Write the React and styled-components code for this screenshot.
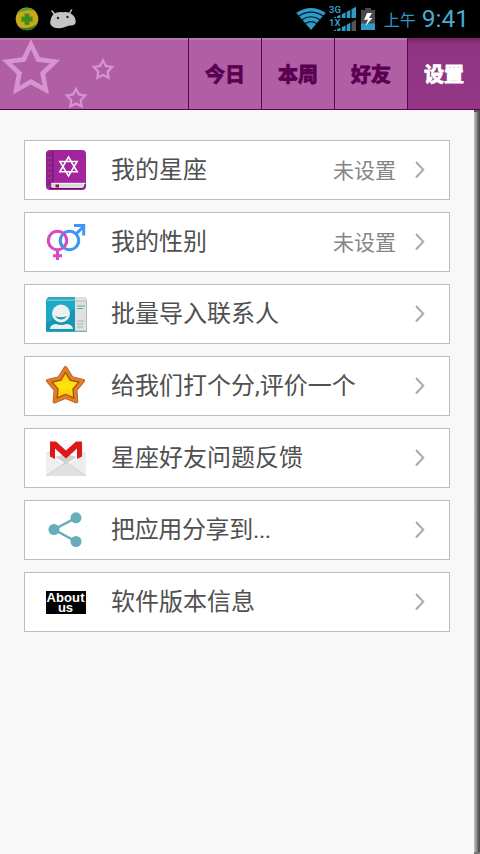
import React from 'react';
import styled, { createGlobalStyle } from 'styled-components';

const GlobalStyle = createGlobalStyle`
  * {
    box-sizing: border-box;
  }

  html, body, #root {
    height: 100%;
  }

  body {
    margin: 0;
    overflow: hidden;
    background: #f8f8f8;
    font-family: Roboto, "Noto Sans CJK SC", sans-serif;
  }

  svg {
    display: block;
    flex: none;
  }
`;

const star = (cx, cy, outer, inner) => {
  const points = [];
  for (let i = 0; i < 10; i++) {
    const r = i % 2 ? inner : outer;
    const a = (Math.PI / 5) * i - Math.PI / 2;
    points.push(`${(cx + r * Math.cos(a)).toFixed(2)} ${(cy + r * Math.sin(a)).toFixed(2)}`);
  }
  return `M${points.join('L')}Z`;
};

const AntivirusIcon = () => (
  <svg width="24" height="24" viewBox="0 0 24 24">
    <circle cx="12" cy="12" r="11.3" fill="#c9a81c" />
    <path d="M2 6A11.3 11.3 0 0 1 20 4C14 2 8 4 2 6Z" fill="#5f9a2c" />
    <path d="M4 20A11.3 11.3 0 0 0 22.5 16C18 21 10 22 4 20Z" fill="#2c7a2c" />
    <path d="M9.5 6.5h5v3.2h3.2v5h-3.2v3.2h-5v-3.2H6.300v-5h3.200z" fill="#3d8c1c" stroke="#86a023" strokeWidth=".7" />
  </svg>
);

const AndroidIcon = () => (
  <svg width="26" height="20" viewBox="0 0 26 20">
    <path d="M4.500 5 2 2M19.500 4.500 21.500 1" stroke="#c4c4c4" strokeWidth="1.500" strokeLinecap="round" />
    <path d="M3.500 5Q8 2.400 13 3.200Q18 2.200 21.500 5Q26 8 25.700 13.500Q25 16.500 21 16.500Q18 16.500 16.500 17.500Q11 20 7 19Q5 19.200 3 18Q-.5 16 .3 12.500Q.5 8 3.500 5Z" fill="#c4c4c4" />
    <circle cx="8" cy="9" r="1.200" fill="#222" />
    <circle cx="17.500" cy="8" r="1.200" fill="#222" />
  </svg>
);

const WifiIcon = () => (
  <svg width="30" height="22" viewBox="0 0 30 22">
    <path d="M.3 4.800Q15-4.800 29.700 4.800L15 22Z" fill="#2e9bc8" />
    <path d="M2.500 8.200Q15 .2 27.500 8.200M5.600 12Q15 5.500 24.400 12M9 15.800Q15 11.500 21 15.800" fill="none" stroke="#041923" strokeWidth="1.200" />
  </svg>
);

const SignalIcon = () => (
  <svg width="27" height="26" viewBox="0 0 27 26" overflow="visible">
    <g fill="#2e9bc8">
      <path d="M3 12 6 10.500V12ZM7 10.300 10.500 8.800V12H7ZM11.800 8.200 15.500 6.300V12H11.800ZM16.700 5.800 20.300 3.800V12H16.700ZM21.500 3.200 26 .7V12H21.500Z" />
      <path d="M3 25 6 23.500V25ZM7 23.300 10.500 21.800V25H7ZM11.800 21.200 15.500 19.300V25H11.800ZM16.700 18.800 20.300 16.800V25H16.700Z" />
    </g>
    <path d="M21.500 16.200 26 13.700V25H21.500Z" fill="#555" />
    <g fill="#3aa5d0" stroke="#000" strokeWidth="1.500" paintOrder="stroke" fontFamily="Roboto" fontSize="9.500" fontWeight="500">
      <text x="-1" y="7">3G</text>
      <text x="-1" y="20">1X</text>
    </g>
  </svg>
);

const BatteryIcon = () => (
  <svg width="14" height="22" viewBox="0 0 14 22">
    <path d="M4 0h6v2h4v14H0V2h4z" fill="#4a4a4a" />
    <path d="M0 15.500h14V22H0z" fill="#2e9bc8" />
    <path d="M6 5 3 12 7 11.500 4.500 18 11.500 10H8L11 5Z" fill="#fff" />
  </svg>
);

const HeaderStars = () => (
  <svg width="188" height="71" viewBox="0 38 188 71">
    <g fill="#d795cf" fillRule="evenodd">
      <path d={star(31, 69.500, 30.500, 15) + star(31, 69.500, 20, 9.500)} />
      <path d={star(103, 70, 12, 6.200) + star(103, 70, 7.200, 3.700)} />
      <path d={star(76, 98.500, 12, 6.200) + star(76, 98.500, 7.200, 3.700)} />
    </g>
  </svg>
);

const BookIcon = () => (
  <svg width="40" height="40" viewBox="0 0 40 40">
    <rect width="40" height="40" rx="4" fill="#a3259d" />
    <path d="M3 1H7V33L2 36Q0 36 0 32V5Q0 2 3 1Z" fill="#91208f" />
    <path d="M7 1V33" stroke="#6f176c" strokeWidth="1" />
    <path d="M1 8H6M1 13H6M1 18H6M1 23H6M1 28H6" stroke="#b55ab2" strokeWidth=".5" />
    <path d="M6 33H39.500Q37.500 35 38 38H7Q3.500 37 6 33Z" fill="#ddd8dc" />
    <path d="M5 33.300H39.500" stroke="#fff" strokeWidth=".8" />
    <path d="M4 38.500H36Q39.500 38 39.500 34" fill="none" stroke="#5e155b" />
    <path d="M9.500 34.500h3.500v3H9.500z" fill="#8f1b2d" />
    <path d="M22.500 7 31.200 21.800H13.800ZM22.500 26 31.200 11.500H13.800Z" fill="none" stroke="#fff" strokeWidth="1.500" />
  </svg>
);

const GenderIcon = () => (
  <svg width="40" height="40" viewBox="0 0 40 40" fill="none" strokeWidth="3">
    <circle cx="23.500" cy="18.500" r="9.200" stroke="#3f96f3" />
    <path d="M30 12 37.300 4.700M28 3.500H37.700V13.500" stroke="#3f96f3" />
    <circle cx="11.500" cy="18.500" r="9.200" stroke="#d44bc5" />
    <path d="M11.500 27.700V38M7 33.700H16" stroke="#d44bc5" />
    <path d="M14.800 15.500A9.200 9.200 0 0 0 17.500 25.500" stroke="#3f96f3" />
  </svg>
);

const ContactsIcon = () => (
  <svg width="42" height="36" viewBox="0 0 42 36">
    <path d="M2 1H39L41 4V36H0V4Z" fill="#36a7bb" />
    <path d="M29 1H39L41 4V35H29Z" fill="#dfe1df" />
    <path d="M1 3.500H29V5H1Z" fill="#65cadb" />
    <path d="M0 5H29V35H0Z" fill="#1da9c5" />
    <path d="M0 27 29 13V35H0Z" fill="#1497b6" />
    <path d="M29 5H41M29 35H41" stroke="#aeb9ba" strokeWidth=".8" />
    <circle cx="15" cy="17.500" r="9" fill="#eef0ef" />
    <path d="M9 20Q15 22.500 21 20Q18.500 23.500 15 23.500Q11.500 23.500 9 20Z" fill="#2196ac" />
    <path d="M4 33Q4 28.500 10 28Q15 30 20.500 28Q26.500 28.500 27 33Z" fill="#eef0ef" />
    <path d="M31 10H39M31 12.500H37" stroke="#4daec0" />
    <path d="M31 25H38M31 28H38M31 31H37" stroke="#bfc4c2" strokeWidth="1.500" />
    <path d="M40.500 5V36" stroke="#b4b8b8" />
  </svg>
);

const StarIcon = () => (
  <svg width="40" height="40" viewBox="0 0 40 40">
    <defs>
      <linearGradient id="gold" x1="0" y1="0" x2="0" y2="1">
        <stop offset="0" stopColor="#ffc60a" />
        <stop offset=".55" stopColor="#ffe60a" />
        <stop offset="1" stopColor="#f9c80e" />
      </linearGradient>
    </defs>
    <path d={star(19.500, 20.500, 18.500, 10.500)} fill="#8a4a20" stroke="#8a6040" strokeWidth="3.800" strokeLinejoin="round" />
    <path d={star(19.500, 20.500, 18.500, 10.500)} fill="#e87b22" stroke="#e87b22" strokeWidth="2.500" strokeLinejoin="round" />
    <path d={star(19.500, 20.500, 14, 7.800)} fill="url(#gold)" stroke="#964f13" strokeWidth="1.200" />
  </svg>
);

const MailIcon = () => (
  <svg width="40" height="40" viewBox="0 0 40 40">
    <path d="M0 15 4 13V18L20 28 36 18V13L40 15V38H0Z" fill="#e5e5e5" />
    <path d="M4 4H36V18L20 28 4 18Z" fill="#fbfbfb" />
    <path d="M17.500 3Q20 .8 22.500 3Z" fill="#e8e8e8" />
    <path d="M0 15 17 27 0 38Z" fill="#efefef" />
    <path d="M40 15 23 27 40 38Z" fill="#ededed" />
    <path d="M0 38 17 26Q20 24 23 26L40 38Z" fill="#e0e0e0" />
    <path d="M0 38 17 26Q20 24 23 26L40 38" fill="none" stroke="#cecece" />
    <path d="M9 19 20 16 31 19 20 26Z" fill="#d1d1d1" />
    <path d="M4 3.500H10L20 12.500 30 3.500H36V18.500L31 21V10.500L20 20.500 9 10.500V21L4 18.500Z" fill="#de1717" />
  </svg>
);

const ShareIcon = () => (
  <svg width="40" height="40" viewBox="0 0 40 40">
    <path d="M30 7.800 8 19.500 30 31.500" fill="none" stroke="#68adbb" strokeWidth="2.500" />
    <g fill="#68adbb">
      <circle cx="30" cy="7.800" r="5.500" />
      <circle cx="8" cy="19.500" r="5.500" />
      <circle cx="30" cy="31.500" r="5.500" />
    </g>
  </svg>
);

const AboutIcon = () => (
  <svg width="40" height="23" viewBox="0 0 40 23">
    <rect width="40" height="23" fill="#000" />
    <g fill="#fff" fontFamily="Liberation Sans" fontWeight="bold" fontSize="13" textAnchor="middle">
      <text x="19.500" y="10.500" textLength="38">About</text>
      <text x="19.500" y="20.500">us</text>
    </g>
  </svg>
);

const ArrowIcon = () => (
  <svg width="10" height="18" viewBox="0 0 10 18">
    <path d="M1 1 8.300 8.700 1 16.500" fill="none" stroke="#aaa" strokeWidth="2" />
  </svg>
);

const tabs = ['今日', '本周', '好友', '设置'];

const items = [
  { label: '我的星座', value: '未设置', icon: <BookIcon /> },
  { label: '我的性别', value: '未设置', icon: <GenderIcon /> },
  { label: '批量导入联系人', icon: <ContactsIcon /> },
  { label: '给我们打个分,评价一个', icon: <StarIcon /> },
  { label: '星座好友问题反馈', icon: <MailIcon /> },
  { label: '把应用分享到...', icon: <ShareIcon />, spacing: '-0.35px' },
  { label: '软件版本信息', icon: <AboutIcon /> },
];

const App = () => {
  return (
    <Screen>
      <GlobalStyle />
      <StatusBar>
        <StatusGroup $gap="11px">
          <AntivirusIcon />
          <AndroidIcon />
        </StatusGroup>
        <StatusGroup $gap="4px">
          <WifiIcon />
          <SignalIcon />
          <BatteryIcon />
          <Period>上午</Period>
          <Clock>9:41</Clock>
        </StatusGroup>
      </StatusBar>

      <Header>
        <HeaderStars />
        {tabs.map((tab) => (
          <Tab key={tab} $active={tab === '设置'}>{tab}</Tab>
        ))}
      </Header>

      <Content>
        <List>
          {items.map((item) => (
            <Row key={item.label}>
              <IconSlot>{item.icon}</IconSlot>
              <Label $spacing={item.spacing}>{item.label}</Label>
              {item.value && <Value>{item.value}</Value>}
              <ArrowIcon />
            </Row>
          ))}
        </List>
        <ScrollBar />
      </Content>
    </Screen>
  );
};

const Screen = styled.div`
  display: flex;
  flex-direction: column;
  width: 480px;
  height: 854px;
  background: #f8f8f8;
`;

const StatusBar = styled.div`
  display: flex;
  align-items: center;
  justify-content: space-between;
  height: 38px;
  padding: 0 11px 0 15px;
  background: #000;
`;

const StatusGroup = styled.div`
  display: flex;
  align-items: center;
  gap: ${({ $gap }) => $gap};
`;

const Period = styled.span`
  margin: 3px 2px 0 5px;
  color: #2e9bc8;
  font-size: 16px;
  line-height: 24px;
`;

const Clock = styled.span`
  color: #49acd5;
  font-size: 24.5px;
  line-height: 36px;
`;

const Header = styled.header`
  display: flex;
  height: 72px;
  background: #b15fa5;
  border-bottom: 1px solid #620055;
  box-shadow: inset 0 2px 0 #b779a9;
`;

const Tab = styled.div`
  display: flex;
  align-items: center;
  justify-content: center;
  width: 73px;
  border-left: 1px solid #620055;
  background: ${({ $active }) => ($active ? 'linear-gradient(#71235f, #8f3482 6px, #953687)' : 'transparent')};
  color: ${({ $active }) => ($active ? '#fff' : '#590050')};
  font-family: "Noto Sans CJK SC", sans-serif;
  font-size: 20px;
  font-weight: 700;
  -webkit-text-stroke: 0.9px currentColor;
`;

const Content = styled.main`
  display: flex;
  flex: 1;
  justify-content: space-between;
`;

const List = styled.div`
  display: flex;
  flex-direction: column;
  gap: 12px;
  width: 450px;
  padding: 30px 0 0 24px;
`;

const Row = styled.div`
  display: flex;
  align-items: center;
  height: 60px;
  padding: 0 24px 0 21px;
  border: 1px solid #bdbdbd;
  background: #fff;
`;

const IconSlot = styled.div`
  display: flex;
  align-items: center;
  width: 65px;
  height: 40px;
`;

const Label = styled.span`
  flex: 1;
  color: #505050;
  font-size: 24px;
  line-height: 36px;
  letter-spacing: ${({ $spacing }) => $spacing || 'normal'};
  white-space: nowrap;
`;

const Value = styled.span`
  margin-right: 19px;
  padding-top: 2px;
  color: #858585;
  font-size: 21px;
  line-height: 32px;
`;

const ScrollBar = styled.div`
  width: 6px;
  background: linear-gradient(90deg, #c8c8c8, #9a9a9a 35%, #606060 70%, #484848);
  border-top: 2px solid #555;
  border-bottom: 2px solid #777;
`;

export default App;
